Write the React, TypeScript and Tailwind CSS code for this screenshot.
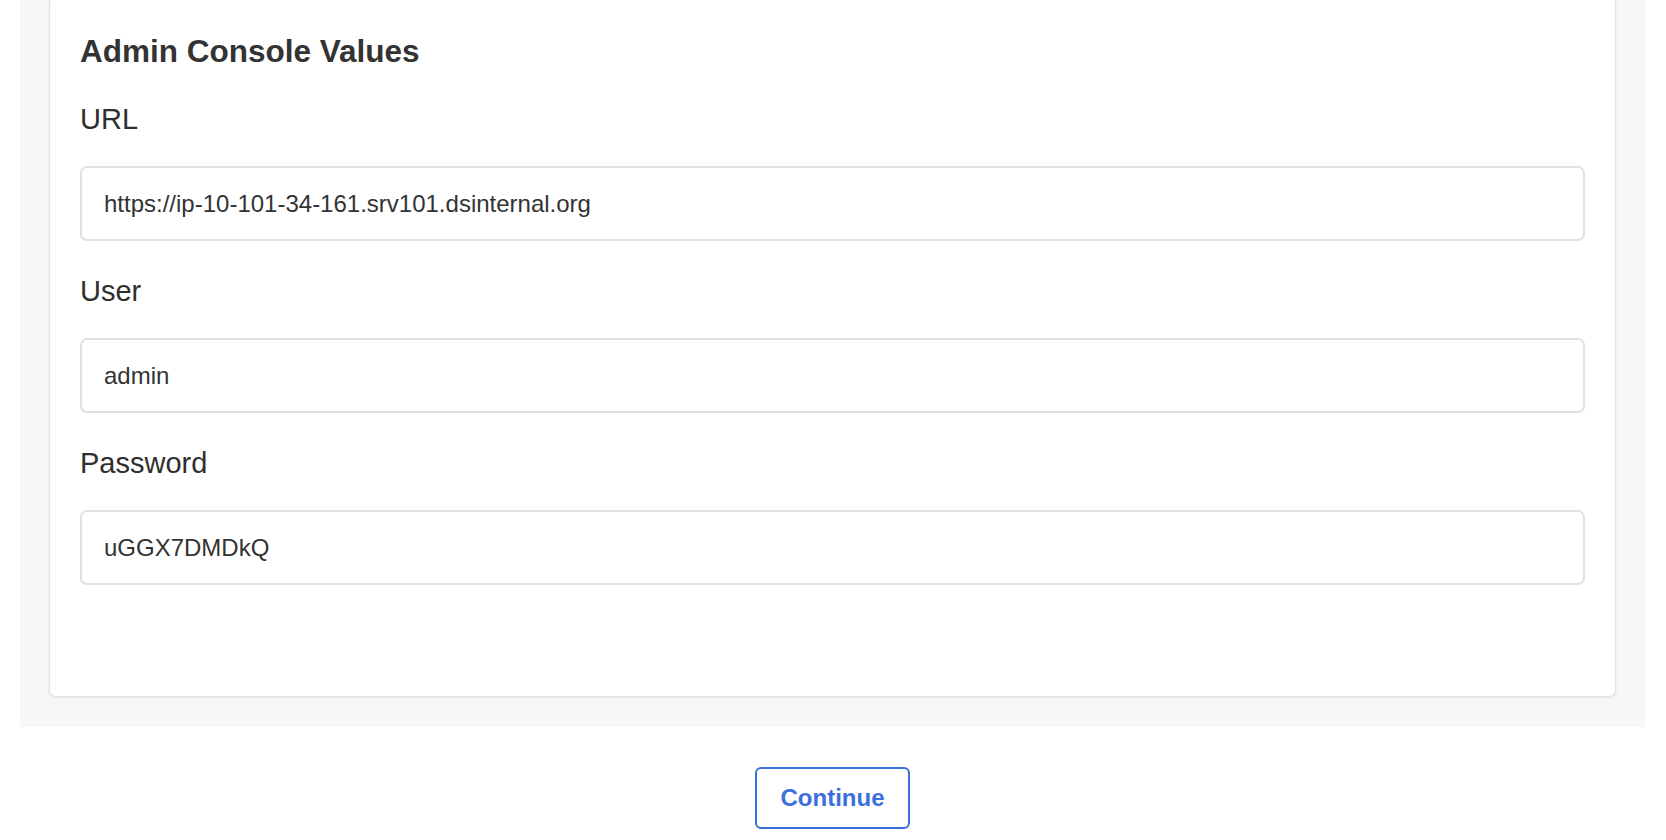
import React from "react";

const fields = [
  { label: "URL", value: "https://ip-10-101-34-161.srv101.dsinternal.org" },
  { label: "User", value: "admin" },
  { label: "Password", value: "uGGX7DMDkQ" },
];

export default function App() {
  return (
    <div
      className="min-h-[840px] bg-white text-[#333333]"
      style={{ fontFamily: '"Liberation Sans", Arial, Helvetica, sans-serif' }}
    >
      <div className="pl-[20px] pr-[21px]">
        <div className="bg-[#f7f7f7] px-[29px] pb-[30px]">
          <div className="rounded-b-[7px] border border-t-0 border-[#e3e3e3] bg-white px-[30px] pt-[33px] pb-[111px] shadow-[0_1px_3px_rgba(0,0,0,0.07)]">
            <h2 className="text-[31.5px] font-bold leading-[37px] text-[#333333]">
              Admin Console Values
            </h2>
            {fields.map((f, i) => (
              <div key={f.label} className={i === 0 ? "mt-[33px]" : "mt-[34px]"}>
                <div className="text-[29px] leading-[32px] text-[#2f2f2f]">{f.label}</div>
                <div className="mt-[31px] flex h-[75px] items-center rounded-[7px] border-2 border-[#e1e1e1] bg-white px-[22px] text-[24px] text-[#333333]">
                  {f.value}
                </div>
              </div>
            ))}
          </div>
        </div>
        <div className="mt-[40px] flex justify-center">
          <button className="h-[62px] w-[155px] rounded-[6px] border-2 border-[#3b6fdb] bg-white text-[24px] font-bold text-[#3b6fdb]">
            Continue
          </button>
        </div>
      </div>
    </div>
  );
}
